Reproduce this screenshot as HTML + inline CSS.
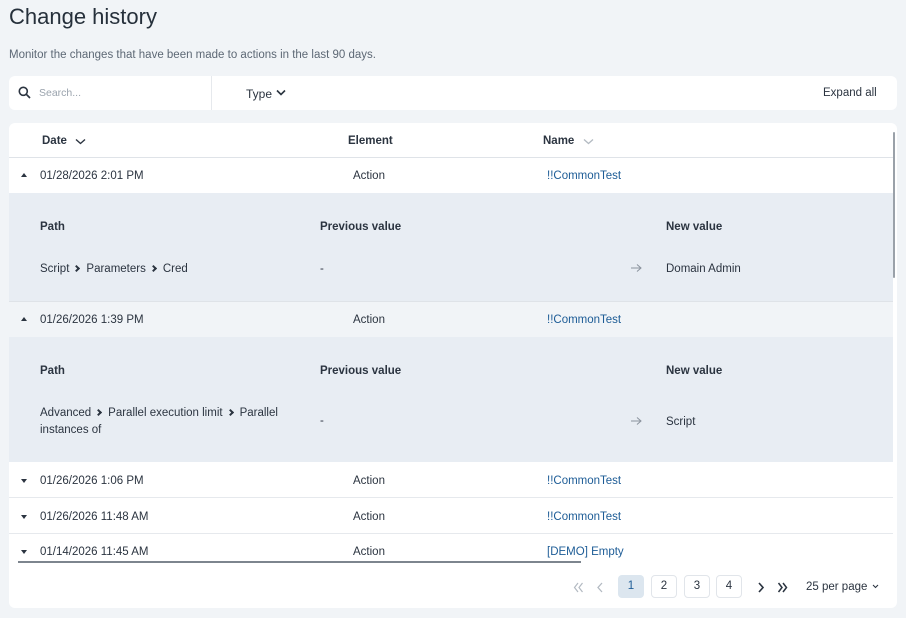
<!DOCTYPE html>
<html><head><meta charset="utf-8"><style>
*{box-sizing:border-box;margin:0;padding:0}
body{width:906px;height:618px;background:#f1f4f7;font-family:"Liberation Sans",sans-serif;color:#2b3440;position:relative;overflow:hidden;font-size:11.5px}
.a{position:absolute;white-space:nowrap}
.b{font-weight:bold}
.lnk{color:#1d5c96}
.card{position:absolute;background:#fff;border-radius:6px}
.row{position:absolute;left:9px;width:884px}
.exp{background:#e8edf3}
.chev{display:inline-block;width:5px;height:5px;border-right:2px solid #2b3440;border-bottom:2px solid #2b3440;transform:rotate(-45deg);margin:0 7px 1px 5px}
</style></head><body>
<div class="a" style="left:9px;top:4px;font-size:22px;color:#26303b">Change history</div>
<div class="a" style="left:9px;top:49px;font-size:11.5px;color:#5d6875">Monitor the changes that have been made to actions in the last 90 days.</div>

<div class="card" style="left:9px;top:76px;width:888px;height:34px"></div>
<svg class="a" style="left:18px;top:86px" width="13" height="13" viewBox="0 0 13 13"><circle cx="5.3" cy="5.3" r="4" fill="none" stroke="#2b3440" stroke-width="1.6"/><path d="M8.3 8.3L12 12" stroke="#2b3440" stroke-width="1.7"/></svg>
<div class="a" style="left:39px;top:87px;font-size:10.5px;color:#9aa3ad">Search...</div>
<div class="a" style="left:211px;top:76px;width:1px;height:34px;background:#e6e9ed"></div>
<div class="a" style="left:246px;top:87px;font-size:12px">Type</div>
<svg class="a" style="left:276px;top:89px" width="10" height="7"><path d="M1 1.5L5 5.5L9 1.5" fill="none" stroke="#2b3440" stroke-width="1.6"/></svg>
<div class="a" style="left:823px;top:87px;font-size:11.5px">Expand all</div>

<div class="card" style="left:9px;top:123px;width:888px;height:485px;overflow:hidden"></div>
<div class="a b" style="left:42px;top:135px">Date</div>
<svg class="a" style="left:75px;top:138px" width="11" height="7"><path d="M1 1.5L5.5 5.5L10 1.5" fill="none" stroke="#2b3440" stroke-width="1.4"/></svg>
<div class="a b" style="left:348px;top:135px">Element</div>
<div class="a b" style="left:543px;top:135px">Name</div>
<svg class="a" style="left:583px;top:138px" width="11" height="7"><path d="M1 1.5L5.5 5.5L10 1.5" fill="none" stroke="#b3bac2" stroke-width="1.3"/></svg>
<div class="row" style="top:157px;height:1px;background:#dfe3e8"></div>

<div class="a" style="left:21px;top:173px;width:0;height:0;border-left:3.5px solid transparent;border-right:3.5px solid transparent;border-bottom:4px solid #2b3440"></div>
<div class="a" style="left:40px;top:170px">01/28/2026 2:01 PM</div>
<div class="a" style="left:353px;top:170px">Action</div>
<div class="a lnk" style="left:547px;top:170px">!!CommonTest</div>
<div class="row exp" style="top:193px;height:108px"></div>
<div class="a b" style="left:40px;top:221px">Path</div>
<div class="a b" style="left:320px;top:221px">Previous value</div>
<div class="a b" style="left:666px;top:221px">New value</div>
<div class="a" style="left:40px;top:263px">Script<span class="chev"></span>Parameters<span class="chev"></span>Cred</div>
<div class="a" style="left:320px;top:263px">-</div>
<svg class="a" style="left:630px;top:263px" width="12" height="10"><path d="M1 5H11M7 1.5L11 5L7 8.5" fill="none" stroke="#8a939d" stroke-width="1"/></svg>
<div class="a" style="left:666px;top:263px">Domain Admin</div>

<div class="row" style="top:301px;height:1px;background:#dfe3e8"></div>
<div class="row" style="top:302px;height:35px;background:#f1f4f7"></div>
<div class="a" style="left:21px;top:317px;width:0;height:0;border-left:3.5px solid transparent;border-right:3.5px solid transparent;border-bottom:4px solid #2b3440"></div>
<div class="a" style="left:40px;top:314px">01/26/2026 1:39 PM</div>
<div class="a" style="left:353px;top:314px">Action</div>
<div class="a lnk" style="left:547px;top:314px">!!CommonTest</div>
<div class="row exp" style="top:337px;height:125px"></div>
<div class="a b" style="left:40px;top:365px">Path</div>
<div class="a b" style="left:320px;top:365px">Previous value</div>
<div class="a b" style="left:666px;top:365px">New value</div>
<div class="a" style="left:40px;top:407px">Advanced<span class="chev"></span>Parallel execution limit<span class="chev"></span>Parallel</div>
<div class="a" style="left:40px;top:424px">instances of</div>
<div class="a" style="left:320px;top:415px">-</div>
<svg class="a" style="left:630px;top:416px" width="12" height="10"><path d="M1 5H11M7 1.5L11 5L7 8.5" fill="none" stroke="#8a939d" stroke-width="1"/></svg>
<div class="a" style="left:666px;top:416px">Script</div>

<div class="a" style="left:21px;top:479px;width:0;height:0;border-left:3.5px solid transparent;border-right:3.5px solid transparent;border-top:4px solid #2b3440"></div>
<div class="a" style="left:40px;top:475px">01/26/2026 1:06 PM</div>
<div class="a" style="left:353px;top:475px">Action</div>
<div class="a lnk" style="left:547px;top:475px">!!CommonTest</div>
<div class="row" style="top:497px;height:1px;background:#e6e9ed"></div>
<div class="a" style="left:21px;top:515px;width:0;height:0;border-left:3.5px solid transparent;border-right:3.5px solid transparent;border-top:4px solid #2b3440"></div>
<div class="a" style="left:40px;top:511px">01/26/2026 11:48 AM</div>
<div class="a" style="left:353px;top:511px">Action</div>
<div class="a lnk" style="left:547px;top:511px">!!CommonTest</div>
<div class="row" style="top:533px;height:1px;background:#e6e9ed"></div>
<div class="a" style="left:21px;top:550px;width:0;height:0;border-left:3.5px solid transparent;border-right:3.5px solid transparent;border-top:4px solid #2b3440"></div>
<div class="a" style="left:40px;top:546px">01/14/2026 11:45 AM</div>
<div class="a" style="left:353px;top:546px">Action</div>
<div class="a lnk" style="left:547px;top:546px">[DEMO] Empty</div>
<div class="a" style="left:18px;top:561px;width:563px;height:1.5px;background:#7d858e"></div>

<div class="a" style="left:893px;top:132px;width:2px;height:146px;background:#9aa1a9;border-radius:1px"></div>

<svg class="a" style="left:573px;top:582px" width="11" height="11"><path d="M5 1L1.5 5.5L5 10M9.5 1L6 5.5L9.5 10" fill="none" stroke="#b3bac2" stroke-width="1.2"/></svg>
<svg class="a" style="left:596px;top:582px" width="8" height="11"><path d="M6 1L2 5.5L6 10" fill="none" stroke="#b3bac2" stroke-width="1.3"/></svg>
<div class="a" style="left:618px;top:575px;width:26px;height:23px;background:#dce6ef;border-radius:4px;text-align:center;line-height:23px;color:#1d5c96">1</div>
<div class="a" style="left:651px;top:575px;width:26px;height:23px;border:1px solid #e1e5ea;border-radius:4px;text-align:center;line-height:21px">2</div>
<div class="a" style="left:684px;top:575px;width:26px;height:23px;border:1px solid #e1e5ea;border-radius:4px;text-align:center;line-height:21px">3</div>
<div class="a" style="left:716px;top:575px;width:26px;height:23px;border:1px solid #e1e5ea;border-radius:4px;text-align:center;line-height:21px">4</div>
<svg class="a" style="left:757px;top:582px" width="8" height="11"><path d="M2 1L6 5.5L2 10" fill="none" stroke="#2b3440" stroke-width="1.6"/></svg>
<svg class="a" style="left:777px;top:582px" width="11" height="11"><path d="M1.5 1L5 5.5L1.5 10M6 1L9.5 5.5L6 10" fill="none" stroke="#2b3440" stroke-width="1.5"/></svg>
<div class="a" style="left:806px;top:581px">25 per page</div>
<svg class="a" style="left:872px;top:584px" width="7" height="5"><path d="M1 1L3.5 3.5L6 1" fill="none" stroke="#2b3440" stroke-width="1.1"/></svg>
</body></html>
